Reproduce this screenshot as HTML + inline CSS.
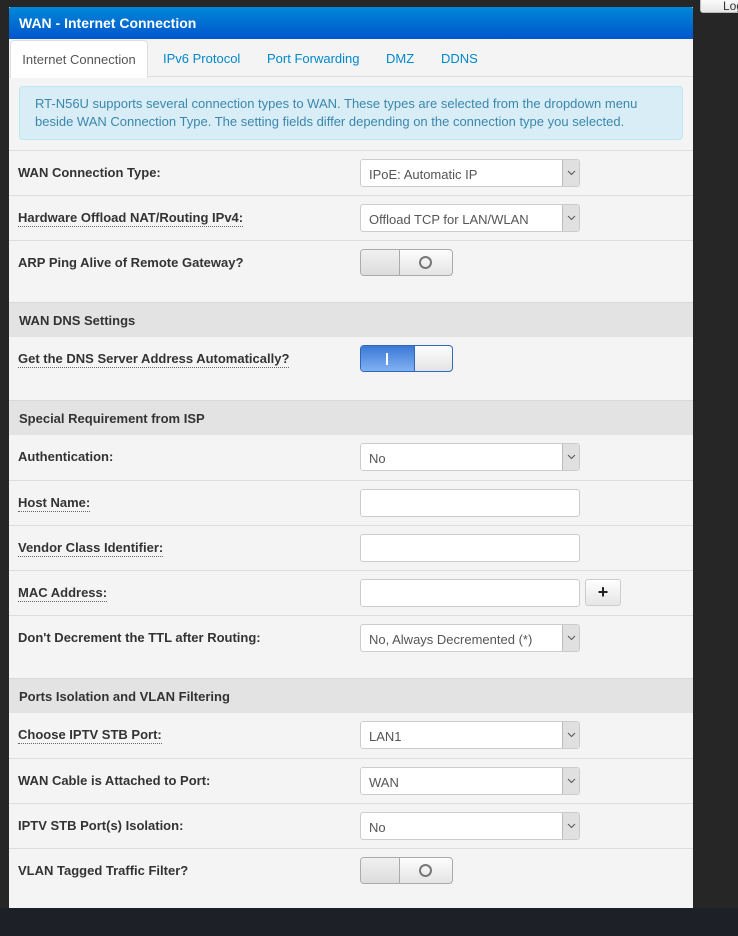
<!DOCTYPE html>
<html><head><meta charset="utf-8"><style>
*{box-sizing:border-box;margin:0;padding:0}
body{width:738px;height:936px;background:#262626;position:relative;overflow:hidden;font-family:"Liberation Sans",Arial,sans-serif;font-size:13px;color:#333}
.bot{position:absolute;left:0;top:908px;width:738px;height:28px;background:#1d2127}
.logout{position:absolute;left:700px;top:-4px;width:50px;height:17px;background:linear-gradient(#fff,#e6e6e6);border:1px solid #bbb;border-radius:3px;font-size:12px;color:#333;padding:2px 0 0 22px}
.panel{position:absolute;left:9px;top:7px;width:684px;height:901px;background:#f4f4f4}
.hdr{height:32px;background:linear-gradient(#0088d8,#0055cc);color:#fff;font-weight:bold;font-size:14px;padding:8px 10px;border-radius:2px 2px 0 0}
.tabs{position:absolute;top:32px;left:0;width:684px;height:38px;border-bottom:1px solid #ddd}
.tab{position:absolute;top:1px;height:38px;font-size:13px;color:#0088cc;padding-top:11px}
.tab.act{background:#fff;color:#555;border:1px solid #ddd;border-bottom:none;border-radius:4px 4px 0 0;left:1px;width:138px;text-align:center}
.info{position:absolute;left:10px;top:79px;width:664px;height:54px;background:#d9edf7;border:1px solid #bce8f1;border-radius:4px;color:#3a87ad;font-size:13px;line-height:18px;padding:8px 0 0 15px;white-space:nowrap}
.row{position:absolute;left:0;width:684px;border-top:1px solid #ddd}
.lab{position:absolute;left:9px;top:14px;font-weight:bold;font-size:13px;color:#333}
.u{border-bottom:1px dotted #666;padding-bottom:1px}
.sec{position:absolute;left:0;width:684px;height:35px;background:#e3e3e3;border-top:1px solid #d8d8d8;font-weight:bold;padding:10px 10px;color:#333}
.sel{position:absolute;left:351px;top:8px;width:220px;height:28px;background:#fff;border:1px solid #ccc;border-radius:3px;padding:7px 8px;font-size:13px;color:#555}
.sel:after{content:"";position:absolute;right:0;top:0;width:16px;height:26px;background:#e0e0e0;border-left:1px solid #bbb}
.sel svg{position:absolute;right:3px;top:10px;z-index:2}
.inp{position:absolute;left:351px;top:8px;width:220px;height:28px;background:#fff;border:1px solid #ccc;border-radius:3px}
.plus{position:absolute;left:576px;top:8px;width:36px;height:27px;background:linear-gradient(#fff,#e6e6e6);border:1px solid #ccc;border-radius:3px;text-align:center;font-weight:bold;font-size:18px;line-height:24px;color:#222}
.tg{position:absolute;left:351px;top:8px;width:93px;height:27px;border:1px solid #aaa;border-radius:4px;overflow:hidden;background:linear-gradient(#fdfdfd,#e4e4e4)}
.tg .l{position:absolute;left:0;top:0;width:39px;height:25px;border-right:1px solid #aaa;background:linear-gradient(#f0f0f0,#dcdcdc)}
.tg .o{position:absolute;left:58px;top:6px;width:13px;height:13px;border:2px solid #777;border-radius:50%}
.tg.on{border-color:#2f67c0}
.tg.on .l{width:54px;background:linear-gradient(#3a79d6,#82b1f2);border-right:1px solid #2f67c0}
.tg.on .l:after{content:"";position:absolute;left:25px;top:7px;width:2px;height:12px;background:#fff}
</style></head><body>
<div class="logout">Logout</div>
<div class="panel">
<div class="hdr">WAN - Internet Connection</div>
<div class="tabs">
<div class="tab act">Internet Connection</div>
<div class="tab" style="left:154px">IPv6 Protocol</div>
<div class="tab" style="left:258px">Port Forwarding</div>
<div class="tab" style="left:377px">DMZ</div>
<div class="tab" style="left:432px">DDNS</div>
</div>
<div class="info">RT-N56U supports several connection types to WAN. These types are selected from the dropdown menu<br>beside WAN Connection Type. The setting fields differ depending on the connection type you selected.</div>

<div class="row" style="top:143px;height:45px"><div class="lab">WAN Connection Type:</div><div class="sel">IPoE: Automatic IP<svg width="9" height="6"><path d="M1 1L4.5 4.5L8 1" fill="none" stroke="#555" stroke-width="1"/></svg></div></div>
<div class="row" style="top:188px;height:45px"><div class="lab"><span class="u">Hardware Offload NAT/Routing IPv4:</span></div><div class="sel">Offload TCP for LAN/WLAN<svg width="9" height="6"><path d="M1 1L4.5 4.5L8 1" fill="none" stroke="#555" stroke-width="1"/></svg></div></div>
<div class="row" style="top:233px;height:62px"><div class="lab">ARP Ping Alive of Remote Gateway?</div><div class="tg"><div class="l"></div><div class="o"></div></div></div>
<div class="sec" style="top:295px">WAN DNS Settings</div>
<div class="row" style="top:330px;height:63px;border-top:none"><div class="lab"><span class="u">Get the DNS Server Address Automatically?</span></div><div class="tg on"><div class="l"></div></div></div>
<div class="sec" style="top:393px">Special Requirement from ISP</div>
<div class="row" style="top:428px;height:45px;border-top:none"><div class="lab">Authentication:</div><div class="sel">No<svg width="9" height="6"><path d="M1 1L4.5 4.5L8 1" fill="none" stroke="#555" stroke-width="1"/></svg></div></div>
<div class="row" style="top:473px;height:45px"><div class="lab"><span class="u">Host Name:</span></div><div class="inp"></div></div>
<div class="row" style="top:518px;height:45px"><div class="lab"><span class="u">Vendor Class Identifier:</span></div><div class="inp"></div></div>
<div class="row" style="top:563px;height:45px"><div class="lab"><span class="u">MAC Address:</span></div><div class="inp"></div><div class="plus">+</div></div>
<div class="row" style="top:608px;height:63px"><div class="lab">Don't Decrement the TTL after Routing:</div><div class="sel">No, Always Decremented (*)<svg width="9" height="6"><path d="M1 1L4.5 4.5L8 1" fill="none" stroke="#555" stroke-width="1"/></svg></div></div>
<div class="sec" style="top:671px">Ports Isolation and VLAN Filtering</div>
<div class="row" style="top:706px;height:45px;border-top:none"><div class="lab"><span class="u">Choose IPTV STB Port:</span></div><div class="sel">LAN1<svg width="9" height="6"><path d="M1 1L4.5 4.5L8 1" fill="none" stroke="#555" stroke-width="1"/></svg></div></div>
<div class="row" style="top:751px;height:45px"><div class="lab">WAN Cable is Attached to Port:</div><div class="sel">WAN<svg width="9" height="6"><path d="M1 1L4.5 4.5L8 1" fill="none" stroke="#555" stroke-width="1"/></svg></div></div>
<div class="row" style="top:796px;height:45px"><div class="lab">IPTV STB Port(s) Isolation:</div><div class="sel">No<svg width="9" height="6"><path d="M1 1L4.5 4.5L8 1" fill="none" stroke="#555" stroke-width="1"/></svg></div></div>
<div class="row" style="top:841px;height:60px"><div class="lab">VLAN Tagged Traffic Filter?</div><div class="tg"><div class="l"></div><div class="o"></div></div></div>
</div>
<div class="bot"></div>
</body></html>
